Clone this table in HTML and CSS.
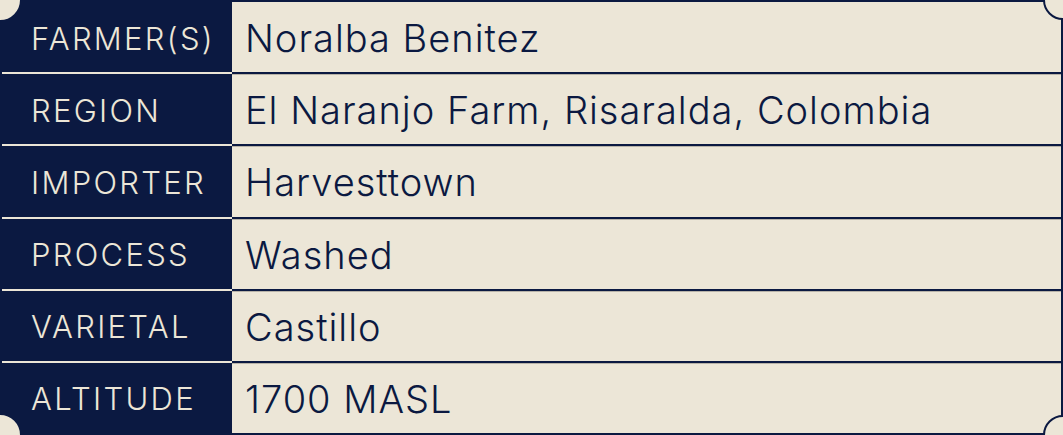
FILE: index.html
```html
<!DOCTYPE html>
<html>
<head>
<meta charset="utf-8">
<link rel="stylesheet" href="styles.css">
</head>
<body>
<div class="card">
  <div class="row"><div class="label">FARMER(S)</div><div class="value">Noralba Benitez</div></div>
  <div class="row"><div class="label">REGION</div><div class="value">El Naranjo Farm, Risaralda, Colombia</div></div>
  <div class="row"><div class="label">IMPORTER</div><div class="value">Harvesttown</div></div>
  <div class="row"><div class="label">PROCESS</div><div class="value">Washed</div></div>
  <div class="row"><div class="label">VARIETAL</div><div class="value">Castillo</div></div>
  <div class="row"><div class="label">ALTITUDE</div><div class="value">1700 MASL</div></div>
  <span class="notch tl"></span>
  <span class="notch tr"></span>
  <span class="notch bl"></span>
  <span class="notch br"></span>
</div>
</body>
</html>
```

FILE: styles.css
```css
* { box-sizing: border-box; }
html, body { margin: 0; padding: 0; }
body {
  background: #ece6d7;
  width: 1063px;
  height: 435px;
  overflow: hidden;
}
.card {
  position: relative;
  width: 1063px;
  height: 435px;
  border: 2px solid #0b1941;
  display: flex;
  flex-direction: column;
}
.row {
  display: flex;
  flex: 1;
  border-top: 2px solid #0b1941;
}
.row:first-child { border-top: none; }
.label {
  width: 230px;
  background: #0b1941;
  color: #ece6d7;
  font-family: Inter, "Open Sans", sans-serif;
  font-weight: 320;
  font-size: 31px;
  letter-spacing: 2.3px;
  display: flex;
  align-items: center;
  padding-left: 29px;
  padding-top: 2px;
  white-space: nowrap;
}
.row + .row .label {
  margin-top: -2px;
  border-top: 2px solid #ece6d7;
}
.value {
  flex: 1;
  color: #0b1941;
  font-family: Inter, "Open Sans", sans-serif;
  font-weight: 300;
  font-size: 38px;
  letter-spacing: 1px;
  display: flex;
  align-items: center;
  padding-left: 13px;
  padding-top: 1px;
  white-space: nowrap;
}
.row + .row .value {
  border-top: 1px solid #b7b2a8;
}
.notch {
  position: absolute;
  width: 40px;
  height: 40px;
  border-radius: 50%;
  background: #ece6d7;
  border: 2px solid #0b1941;
}
.tl { left: -22px; top: -22px; border-color: #ece6d7; }
.tr { right: -22px; top: -22px; }
.bl { left: -22px; bottom: -22px; border-color: #ece6d7; }
.br { right: -22px; bottom: -22px; }
```
